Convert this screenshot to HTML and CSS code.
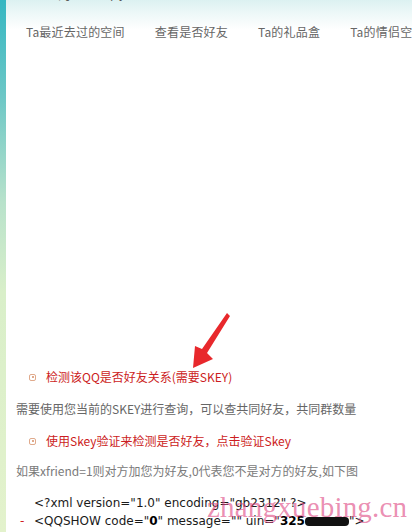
FILE: index.html
```html
<!DOCTYPE html>
<html lang="zh-CN">
<head>
<meta charset="utf-8">
<title>检测该QQ是否好友关系</title>
<link rel="stylesheet" href="styles.css">
</head>
<body>
<div class="page">
  <div class="strip"></div>
  <div class="main">
    <div class="top">
      <div class="title">Ta的个人空间</div>
      <ul class="nav">
        <li>Ta最近去过的空间</li>
        <li>查看是否好友</li>
        <li>Ta的礼品盒</li>
        <li>Ta的情侣空间</li>
      </ul>
    </div>
    <div class="content">
      <div class="item"><span class="bullet"><span class="dot"></span></span><span class="red">检测该QQ是否好友关系(需要SKEY)</span></div>
      <p class="para">需要使用您当前的SKEY进行查询，可以查共同好友，共同群数量</p>
      <div class="item"><span class="bullet"><span class="dot"></span></span><span class="red">使用Skey验证来检测是否好友，点击验证Skey</span></div>
      <p class="para light">如果xfriend=1则对方加您为好友,0代表您不是对方的好友,如下图</p>
      <div class="xml">
        <div class="xline"><span class="minus"></span>&lt;?xml version="1.0" encoding="gb2312" ?&gt;</div>
        <div class="xline"><span class="minus">-</span>&lt;QQSHOW code="<b>0</b>" message="" uin="<b>325</b><span class="blot"></span>"&gt;</div>
      </div>
    </div>
  </div>
  <svg class="arrow" width="412" height="532" viewBox="0 0 412 532">
    <polygon points="227,313 230,316 207,353 213,359 193,368 195,346 202,349" fill="#e8282c"/>
  </svg>
  <div class="watermark">zhangxuebing.cn</div>
</div>
</body>
</html>
```

FILE: styles.css
```css
html, body {
  margin: 0;
  padding: 0;
  background: #fff;
}
.page {
  position: relative;
  width: 412px;
  height: 532px;
  overflow: hidden;
  display: flex;
  font-family: "Noto Sans CJK SC", "Liberation Sans", sans-serif;
  font-size: 12px;
}
.strip {
  width: 6px;
  flex: none;
  background: linear-gradient(to bottom, #35b7c2 0%, #6cc7c6 18%, #b8e2cb 38%, #d9efc9 55%, #e3f2cc 100%);
}
.main {
  flex: 1;
  min-width: 0;
}
.top {
  background: linear-gradient(to bottom, #dcf1f1 0px, #eef8f8 14px, #ffffff 30px);
  height: 40px;
  overflow: hidden;
}
.title {
  margin: -13px 0 0 38px;
  height: 14px;
  line-height: 14px;
  font-size: 13px;
  color: #555;
}
.nav {
  list-style: none;
  margin: 23px 0 0 0;
  padding: 0 0 0 20px;
  display: flex;
  gap: 30px;
  white-space: nowrap;
  line-height: 16px;
  color: #666;
  font-size: 12px;
  letter-spacing: 0.2px;
}
.content {
  margin-top: 327px;
  padding-left: 10px;
}
.item {
  display: flex;
  align-items: center;
  height: 20px;
  line-height: 20px;
}
.bullet {
  width: 5px;
  height: 5px;
  border: 1px solid #e0aa8c;
  border-radius: 2px;
  margin: 0 10px 0 13px;
  display: flex;
  align-items: center;
  justify-content: center;
}
.dot {
  width: 2px;
  height: 2px;
  background: #e0aa8c;
}
.red {
  color: #cc1c22;
}
.para {
  margin: 12px 0;
  line-height: 20px;
  color: #666;
}
.para.light {
  margin: 10px 0 13px;
  color: #7a7a7a;
}
.xml {
  font-family: "DejaVu Sans", Verdana, sans-serif;
  font-size: 12px;
  color: #1a1a1a;
}
.xline {
  height: 18px;
  line-height: 18px;
  white-space: nowrap;
  display: flex;
}
.minus {
  display: inline-block;
  width: 18px;
  padding-left: 4px;
  box-sizing: border-box;
  color: #d02020;
}
.xline b {
  font-weight: bold;
  color: #000;
}
.blot {
  display: inline-block;
  width: 44px;
  height: 9px;
  margin-top: 5px;
  background: #111;
  border-radius: 4px;
  filter: blur(0.6px);
}
.arrow {
  position: absolute;
  left: 0;
  top: 0;
  pointer-events: none;
}
.watermark {
  position: absolute;
  left: 207px;
  top: 490px;
  font-family: "Liberation Serif", "Times New Roman", serif;
  font-size: 29px;
  line-height: 34px;
  color: rgba(222, 70, 130, 0.62);
  letter-spacing: 0.2px;
}
```
